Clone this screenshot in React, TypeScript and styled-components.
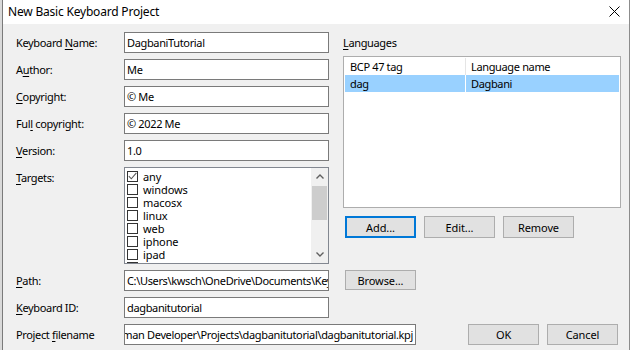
import { FC } from "react";
import styled, { createGlobalStyle, css } from "styled-components";

const GlobalStyle = createGlobalStyle`
  html, body {
    margin: 0;
    padding: 0;
    width: 630px;
    height: 350px;
    overflow: hidden;
    background: #d9d9d9;
  }

  body {
    font-family: "Noto Sans", "Open Sans", sans-serif;
    font-size: 11px;
    color: #000;
  }
`;

const Page = styled.div`
  display: flex;
  height: 350px;
`;

const Window = styled.div`
  margin-left: 2px;
  width: 626px;
  height: 350px;
  display: flex;
  flex-direction: column;
  background: #f0f0f0;
  border-left: 1px solid #7a7a7a;
  border-right: 1px solid #8c8c8c;
`;

const TitleBar = styled.div`
  height: 24px;
  flex: 0 0 24px;
  display: flex;
  align-items: center;
  background: #fff;
  padding-left: 5px;
`;

const Title = styled.span`
  flex: 1;
  font-size: 12px;
  letter-spacing: -0.2px;
  padding-bottom: 2px;
`;

const CloseButton = styled.div`
  width: 30px;
  height: 24px;
  display: flex;
  align-items: center;
  justify-content: center;
  padding-bottom: 2px;
  box-sizing: border-box;
`;

const Body = styled.div`
  display: grid;
  grid-template-columns: 108px 205px 14px 278px;
  grid-template-rows: 21px 21px 21px 21px 21px 97px 21px 21px 21px;
  row-gap: 6px;
  padding: 8px 0 0 13px;
  letter-spacing: -0.35px;
`;

const Label = styled.label`
  grid-column: 1;
  line-height: 21px;
  white-space: nowrap;
`;

const Key = styled.u`
  text-decoration: underline;
  text-underline-offset: 2px;
  text-decoration-thickness: 1px;
`;

const Field = styled.div<{ $width?: number; $alignEnd?: boolean }>`
  grid-column: 2;
  box-sizing: border-box;
  height: 21px;
  width: ${({ $width }) => ($width ? `${$width}px` : "100%")};
  background: #fff;
  border: 1px solid #7a7a7a;
  padding: 0 2px;
  display: flex;
  align-items: center;
  overflow: hidden;
  white-space: nowrap;

  ${({ $alignEnd }) =>
    $alignEnd &&
    css`
      justify-content: flex-end;
    `}
`;

const CheckList = styled.div`
  grid-column: 2;
  box-sizing: border-box;
  border: 1px solid #828790;
  background: #fff;
  display: flex;
  overflow: hidden;
`;

const Items = styled.div`
  flex: 1;
  padding: 2px 0 0 2px;
`;

const Item = styled.div`
  height: 13px;
  display: flex;
  align-items: center;
  gap: 5px;
  letter-spacing: -0.1px;
`;

const Box = styled.span`
  box-sizing: border-box;
  width: 11px;
  height: 11px;
  border: 1px solid #333;
  background: #fff;
  display: flex;
  align-items: center;
  justify-content: center;
`;

const ScrollBar = styled.div`
  width: 17px;
  background: #f0f0f0;
  display: flex;
  flex-direction: column;
  align-items: center;
`;

const Arrow = styled.div`
  height: 17px;
  width: 17px;
  display: flex;
  align-items: center;
  justify-content: center;
`;

const Thumb = styled.div`
  width: 15px;
  height: 34px;
  background: #cdcdcd;
  margin-top: 1px;
`;

const Track = styled.div`
  flex: 1;
`;

const RightTop = styled.div`
  grid-column: 4;
  grid-row: 1 / 7;
  display: flex;
  flex-direction: column;
`;

const SectionLabel = styled.div`
  line-height: 21px;
`;

const ListView = styled.div`
  margin-top: 3px;
  height: 152px;
  box-sizing: border-box;
  border: 1px solid #adadad;
  background: #fff;
  padding: 1px;
`;

const ListRow = styled.div<{ $selected?: boolean }>`
  display: grid;
  grid-template-columns: 121px 1fr;
  height: 17px;
  line-height: 17px;
  background: ${({ $selected }) => ($selected ? "#99d1ff" : "#fff")};
`;

const Cell = styled.div<{ $divider?: string }>`
  padding-left: 5px;
  white-space: nowrap;

  ${({ $divider }) =>
    $divider &&
    css`
      border-right: 1px solid ${$divider};
    `}
`;

const ButtonRow = styled.div`
  display: flex;
  gap: 8px;
  margin: 8px 0 0 2px;
`;

const Button = styled.div<{ $height?: number; $default?: boolean }>`
  box-sizing: border-box;
  width: 71px;
  height: ${({ $height }) => $height ?? 21}px;
  background: #e1e1e1;
  border: 1px solid #adadad;
  display: flex;
  align-items: center;
  justify-content: center;
  letter-spacing: -0.1px;

  ${({ $default }) =>
    $default &&
    css`
      border: 2px solid #0078d7;
    `}
`;

const BrowseCell = styled.div`
  grid-column: 4;
  grid-row: 7;
  padding-left: 2px;
`;

const BottomRow = styled.div`
  grid-column: 2 / 5;
  grid-row: 9;
  display: flex;
  align-items: center;
  padding-right: 3px;
`;

const DialogButtons = styled.div`
  margin-left: auto;
  display: flex;
  gap: 8px;
`;

const Chevron: FC<{ up?: boolean }> = ({ up }) => (
  <svg width="8" height="5" viewBox="0 0 8 5">
    <path
      d={up ? "M0.5 4.5 L4 1 L7.5 4.5" : "M0.5 0.5 L4 4 L7.5 0.5"}
      fill="none"
      stroke="#606060"
      strokeWidth="1.4"
    />
  </svg>
);

const targets = ["any", "windows", "macosx", "linux", "web", "iphone", "ipad", "androidphone"];

const App: FC = () => {
  return (
    <>
      <GlobalStyle />
      <Page>
        <Window>
          <TitleBar>
            <Title>New Basic Keyboard Project</Title>
            <CloseButton>
              <svg width="11" height="11" viewBox="0 0 11 11">
                <path d="M0.5 0.5 L10.5 10.5 M10.5 0.5 L0.5 10.5" stroke="#000" strokeWidth="1" />
              </svg>
            </CloseButton>
          </TitleBar>

          <Body>
            <Label>
              Keyboard <Key>N</Key>ame:
            </Label>
            <Field>DagbaniTutorial</Field>

            <RightTop>
              <SectionLabel>
                <Key>L</Key>anguages
              </SectionLabel>
              <ListView>
                <ListRow>
                  <Cell $divider="#e5e5e5">BCP 47 tag</Cell>
                  <Cell>Language name</Cell>
                </ListRow>
                <ListRow $selected>
                  <Cell $divider="#fff">dag</Cell>
                  <Cell>Dagbani</Cell>
                </ListRow>
              </ListView>
              <ButtonRow>
                <Button $height={22} $default>
                  Add...
                </Button>
                <Button $height={22}>Edit...</Button>
                <Button $height={22}>Remove</Button>
              </ButtonRow>
            </RightTop>

            <Label>
              A<Key>u</Key>thor:
            </Label>
            <Field>Me</Field>

            <Label>
              <Key>C</Key>opyright:
            </Label>
            <Field>© Me</Field>

            <Label>
              Ful<Key>l</Key> copyright:
            </Label>
            <Field>© 2022 Me</Field>

            <Label>
              <Key>V</Key>ersion:
            </Label>
            <Field>1.0</Field>

            <Label>
              <Key>T</Key>argets:
            </Label>
            <CheckList>
              <Items>
                {targets.map((target, i) => (
                  <Item key={target}>
                    <Box>
                      {i === 0 && (
                        <svg width="9" height="9" viewBox="0 0 9 9">
                          <path d="M0.8 4.2 L3.3 6.8 L8.4 0.8" fill="none" stroke="#5a5a5a" strokeWidth="1.1" />
                        </svg>
                      )}
                    </Box>
                    {target}
                  </Item>
                ))}
              </Items>
              <ScrollBar>
                <Arrow>
                  <Chevron up />
                </Arrow>
                <Thumb />
                <Track />
                <Arrow>
                  <Chevron />
                </Arrow>
              </ScrollBar>
            </CheckList>

            <Label>
              <Key>P</Key>ath:
            </Label>
            <Field>C:\Users\kwsch\OneDrive\Documents\Keyman Developer\Projects</Field>
            <BrowseCell>
              <Button $height={20}>Browse...</Button>
            </BrowseCell>

            <Label>
              <Key>K</Key>eyboard ID:
            </Label>
            <Field>dagbanitutorial</Field>

            <Label>
              Project <Key>f</Key>ilename
            </Label>
            <BottomRow>
              <Field $width={292} $alignEnd>
                C:\Users\kwsch\OneDrive\Documents\Keyman Developer\Projects\dagbanitutorial\dagbanitutorial.kpj
              </Field>
              <DialogButtons>
                <Button>OK</Button>
                <Button>Cancel</Button>
              </DialogButtons>
            </BottomRow>
          </Body>
        </Window>
      </Page>
    </>
  );
};

export default App;
